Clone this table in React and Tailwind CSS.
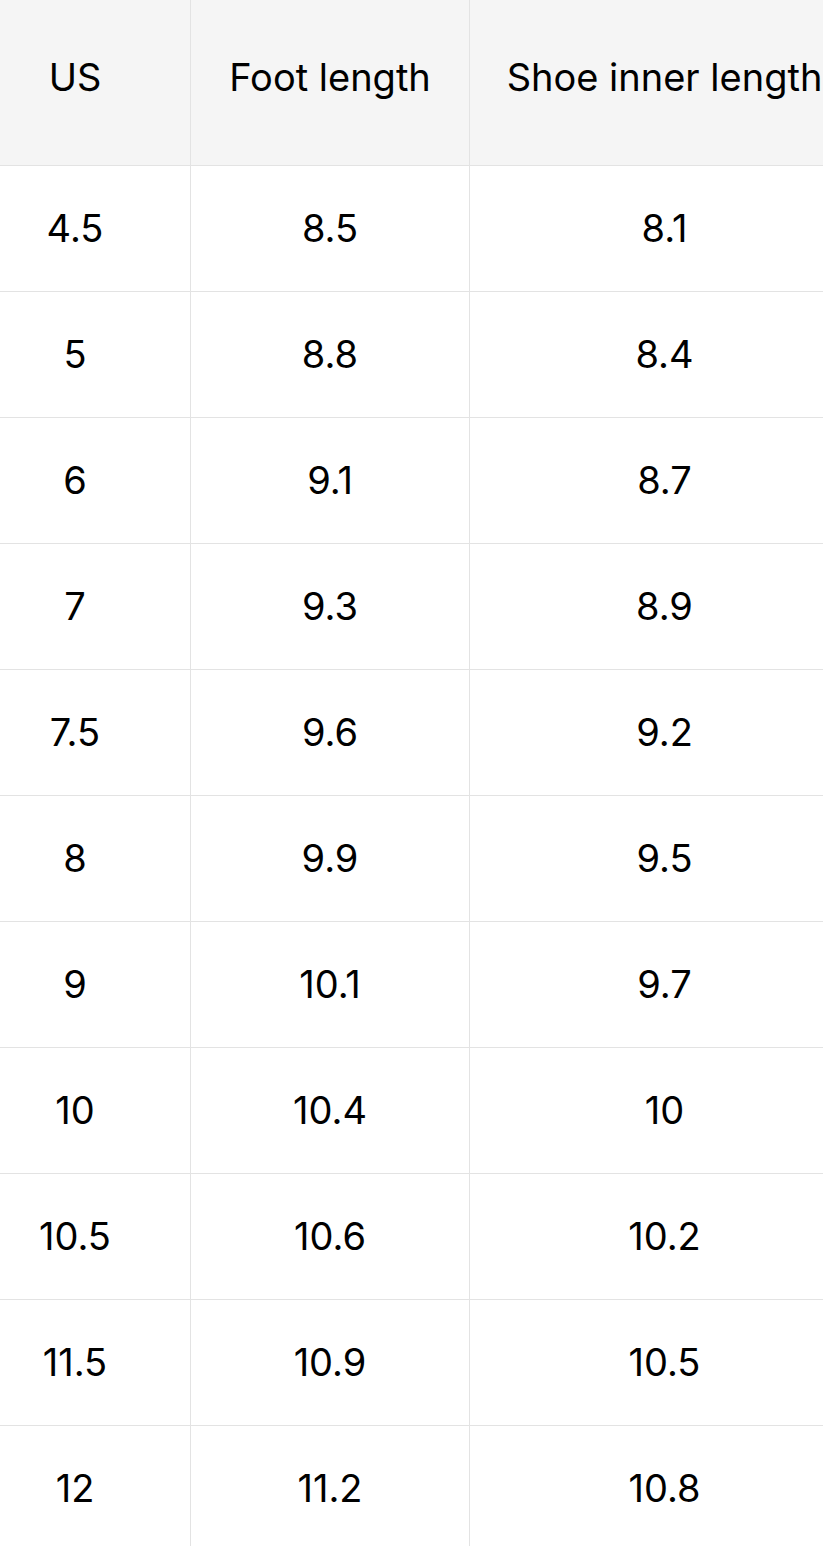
import React from 'react';

const rows = [
  ['4.5', '8.5', '8.1'],
  ['5', '8.8', '8.4'],
  ['6', '9.1', '8.7'],
  ['7', '9.3', '8.9'],
  ['7.5', '9.6', '9.2'],
  ['8', '9.9', '9.5'],
  ['9', '10.1', '9.7'],
  ['10', '10.4', '10'],
  ['10.5', '10.6', '10.2'],
  ['11.5', '10.9', '10.5'],
  ['12', '11.2', '10.8'],
];

const cellBase = 'flex items-center justify-center border-b border-[#e3e3e3]';

const App = () => {
  return (
    <div className="w-[823px] h-[1546px] overflow-hidden bg-white text-black font-['Inter','Liberation_Sans',sans-serif] text-[38px]">
      <div className="-ml-[40px] w-[899px] grid grid-cols-[230px_279px_390px]">
        {/* header */}
        <div className={`${cellBase} h-[166px] pb-[11px] bg-[#f5f5f5]`}>US</div>
        <div className={`${cellBase} h-[166px] pb-[11px] bg-[#f5f5f5] border-l`}>Foot length</div>
        <div className={`${cellBase} h-[166px] pb-[11px] bg-[#f5f5f5] border-l whitespace-nowrap`}>Shoe inner length</div>

        {rows.map((r, i) => (
          <React.Fragment key={i}>
            <div className={`${cellBase} h-[126px]`}>{r[0]}</div>
            <div className={`${cellBase} h-[126px] border-l`}>{r[1]}</div>
            <div className={`${cellBase} h-[126px] border-l`}>{r[2]}</div>
          </React.Fragment>
        ))}
      </div>
    </div>
  );
};

export default App;
